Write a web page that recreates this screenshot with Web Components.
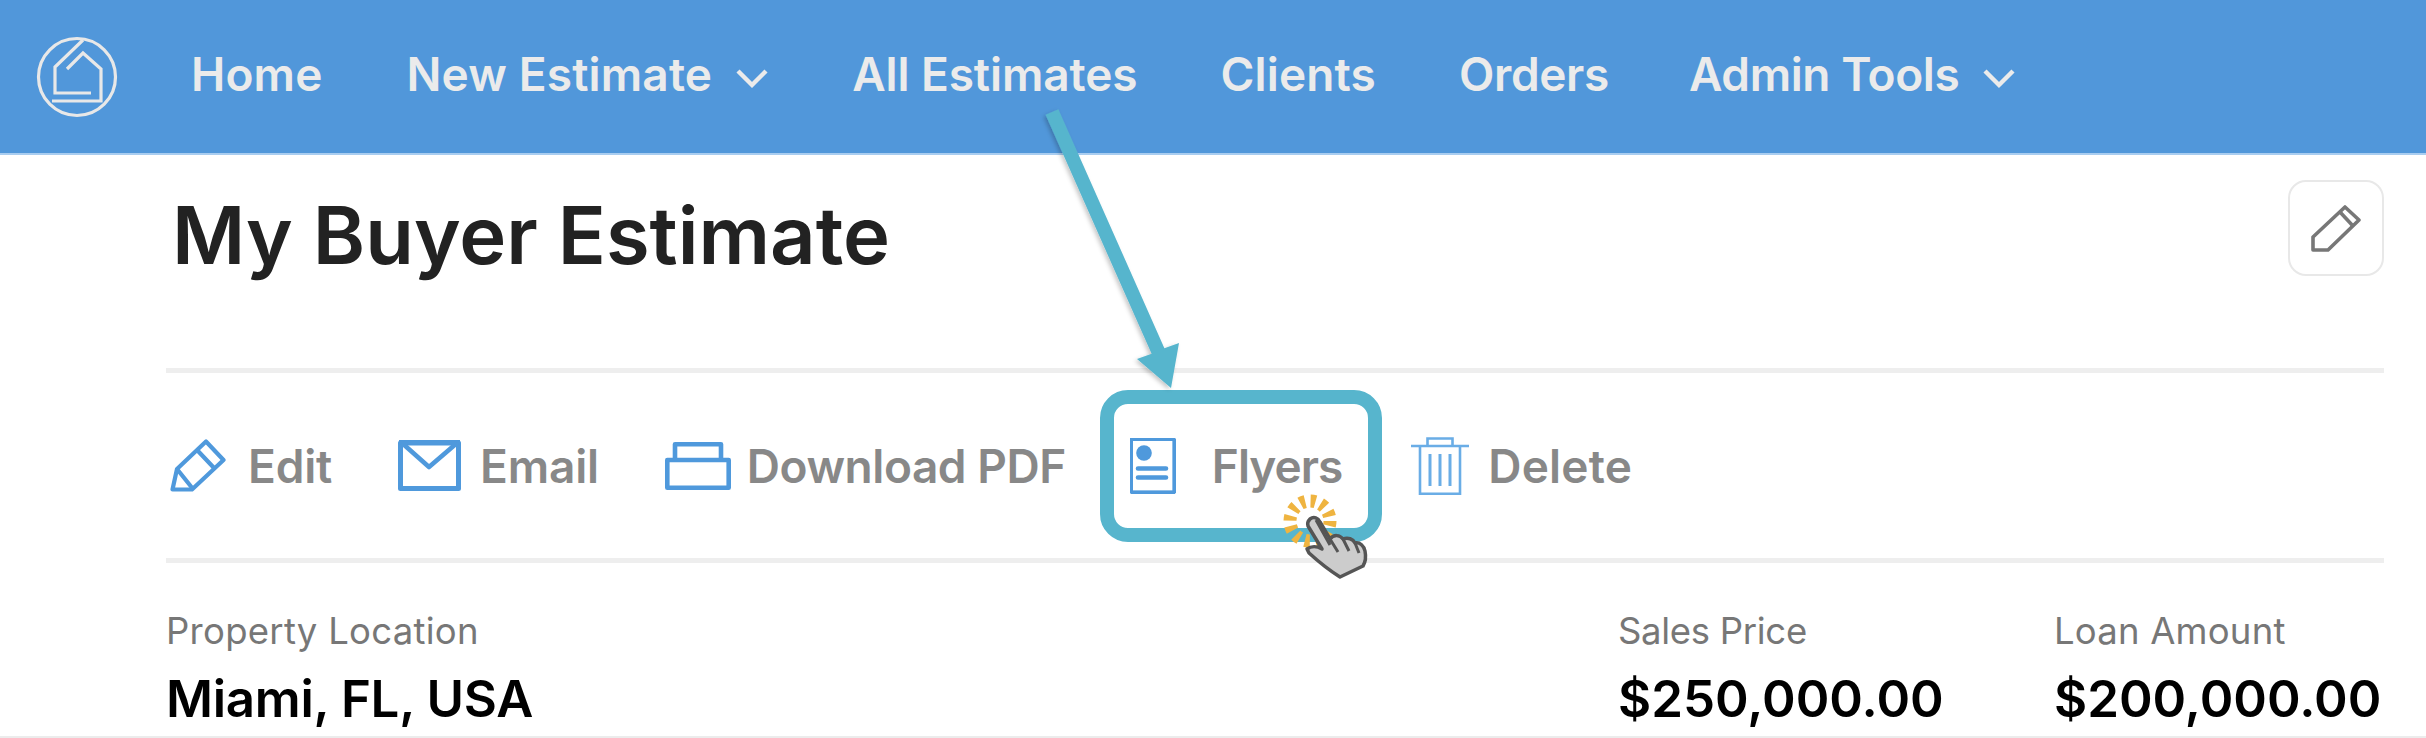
<!DOCTYPE html>
<html lang="en">
<head>
<meta charset="utf-8">
<title>My Buyer Estimate</title>
<style>
    html, body {
        margin: 0;
        height: 738px;
        overflow: hidden;
        background: #fff;
        font-family: Inter, "Noto Sans", "Liberation Sans", sans-serif;
    }
</style>
</head>
<body>

<estimate-app>
    <top-nav>
        <nav-link>Home</nav-link>
        <nav-link menu style="margin-left:1px">New Estimate</nav-link>
        <nav-link style="--track:-0.1px">All Estimates</nav-link>
        <nav-link>Clients</nav-link>
        <nav-link style="--track:-0.35px">Orders</nav-link>
        <nav-link menu style="--track:-0.4px;margin-left:-3px">Admin Tools</nav-link>
    </top-nav>
    <page-title>My Buyer Estimate</page-title>
    <action-bar>
        <action-link icon="edit" style="--gap:22px">Edit</action-link>
        <action-link icon="email" style="--gap:19px">Email</action-link>
        <action-link icon="print" style="--gap:16px;--track:-0.45px">Download PDF</action-link>
        <action-link icon="flyer" style="--gap:36px;--track:-1px;margin-left:-2px">Flyers</action-link>
        <action-link icon="trash" style="--gap:19px;--track:0.2px;margin-left:3px">Delete</action-link>
    </action-bar>
    <estimate-summary>
        <summary-stat label="Property Location" style="margin-right:auto;--label-track:0.27px;--value-track:-0.3px">Miami, FL, USA</summary-stat>
        <summary-stat label="Sales Price" style="width:436px;--label-track:-0.3px">$250,000.00</summary-stat>
        <summary-stat label="Loan Amount" style="width:330px;--label-track:0.2px">$200,000.00</summary-stat>
    </estimate-summary>
    <flyers-callout></flyers-callout>
</estimate-app>

<script>
const templateApp = document.createElement('template')
templateApp.innerHTML = `
<style>
    :host{
        display: block;
        position: relative;
        width: 2426px;
        height: 738px;
        overflow: hidden;
    }
</style>
<slot></slot>
`
class EstimateApp extends HTMLElement {
    constructor(){
        super()
        this.attachShadow({mode:'open'})
        this.shadowRoot.appendChild(templateApp.content.cloneNode(true))
    }
}
customElements.define('estimate-app', EstimateApp)

const templateNav = document.createElement('template')
templateNav.innerHTML = `
<style>
    :host{
        display: flex;
        align-items: center;
        height: 153px;
        border-bottom: 2px solid #a9cdf0;
        background: #5197da;
        color: #ebebeb;
    }
    svg{
        width: 84px;
        height: 84px;
        margin: 0 72px 0 35px;
        flex: none;
    }
    .links{
        display: flex;
        align-items: center;
        gap: 83px;
        margin-bottom: 5px;
    }
</style>
<svg viewBox="35 31 84 84" fill="none" stroke="#e8e8e8" stroke-width="3.2">
    <circle cx="77" cy="73" r="38.5"/>
    <path d="M83 36 55 63V89H91"/>
    <path d="M67 65 83 49 101 65V97H52"/>
</svg>
<div class="links"><slot></slot></div>
`
class TopNav extends HTMLElement {
    constructor(){
        super()
        this.attachShadow({mode:'open'})
        this.shadowRoot.appendChild(templateNav.content.cloneNode(true))
    }
}
customElements.define('top-nav', TopNav)

const templateNavLink = document.createElement('template')
templateNavLink.innerHTML = `
<style>
    :host{
        display: flex;
        align-items: center;
        font-size: 46px;
        font-weight: 600;
        letter-spacing: var(--track, 0.15px);
        line-height: 56px;
    }
    svg{
        display: none;
        width: 34px;
        height: 22px;
        margin-left: 23px;
        margin-top: 8px;
    }
    :host([menu]) svg{
        display: block;
    }
</style>
<slot></slot>
<svg viewBox="0 0 34 22" fill="none" stroke="#ebebeb" stroke-width="4.4"><path d="M3 4 17 18 31 4"/></svg>
`
class NavLink extends HTMLElement {
    constructor(){
        super()
        this.attachShadow({mode:'open'})
        this.shadowRoot.appendChild(templateNavLink.content.cloneNode(true))
    }
}
customElements.define('nav-link', NavLink)

const templateTitle = document.createElement('template')
templateTitle.innerHTML = `
<style>
    :host{
        display: flex;
        align-items: flex-start;
        justify-content: space-between;
        height: 213px;
        margin: 0 42px 0 166px;
        border-bottom: 5px solid #eeeeee;
    }
    h1{
        margin: 33px 0 0 6px;
        font-size: 79.500px;
        font-weight: 600;
        line-height: 94px;
        color: #222;
    }
    button{
        width: 96px;
        height: 96px;
        margin-top: 25px;
        padding: 0;
        border: 2px solid #e8e8e8;
        border-radius: 18px;
        background: #fff;
        display: flex;
        align-items: center;
        justify-content: center;
    }
</style>
<h1><slot></slot></h1>
<button>
    <svg width="50" height="47" viewBox="0 0 50 47" fill="none" stroke="#777" stroke-width="3.600" stroke-linejoin="round">
        <path d="M2 45V32L34 2 48 15 17 45Z"/>
        <path d="M29 7 42 21"/>
    </svg>
</button>
`
class PageTitle extends HTMLElement {
    constructor(){
        super()
        this.attachShadow({mode:'open'})
        this.shadowRoot.appendChild(templateTitle.content.cloneNode(true))
    }
}
customElements.define('page-title', PageTitle)

const templateBar = document.createElement('template')
templateBar.innerHTML = `
<style>
    :host{
        display: flex;
        align-items: center;
        gap: 66px;
        height: 185px;
        margin: 0 42px 0 166px;
        padding-left: 4px;
        border-bottom: 5px solid #eeeeee;
    }
</style>
<slot></slot>
`
class ActionBar extends HTMLElement {
    constructor(){
        super()
        this.attachShadow({mode:'open'})
        this.shadowRoot.appendChild(templateBar.content.cloneNode(true))
    }
}
customElements.define('action-bar', ActionBar)

const actionIcons = {
    edit: `<svg width="56" height="54" viewBox="170 437 56 54" fill="none" stroke="#4f99dc" stroke-width="4.2" stroke-linejoin="round">
        <path d="M206 439.500 223.500 458 192 487.500H172.500L177 467Z"/>
        <path d="M198 449 215 467M177 467 193 487"/>
    </svg>`,
    email: `<svg width="63" height="51" viewBox="400 436 63 51" fill="none" stroke="#4f99dc" stroke-width="5" stroke-linejoin="round">
        <path d="M402.500 439H460.500V484.500H402.500Z" />
        <path d="M401 437.500H462" stroke-width="5.500"/>
        <path d="M404 439 431 463 459 439" stroke-width="4.600"/>
    </svg>`,
    print: `<svg width="66" height="48" viewBox="663 438 66 48" fill="none" stroke="#4f99dc" stroke-width="4.600" stroke-linejoin="round">
        <path d="M673 456V440.300H719V456"/>
        <path d="M665.300 456H726.700V483.700H665.300Z"/>
    </svg>`,
    flyer: `<svg width="46" height="56" viewBox="1130 436 46 56" fill="none" stroke="#4f99dc" stroke-width="3">
        <path d="M1131.500 437.500H1174V490H1131.500Z" />
        <path d="M1174.500 437V491M1131 490.500H1175" stroke-width="3.500"/>
        <circle cx="1144" cy="451" r="7.800" fill="#4f99dc" stroke="none"/>
        <path d="M1138 466.500H1166M1138 475.500H1166" stroke-width="4.600" stroke-linecap="round"/>
    </svg>`,
    trash: `<svg width="58" height="58" viewBox="1412 436 58 58" fill="none" stroke="#6aade6" stroke-width="2.6">
        <path d="M1412 445H1470"/>
        <path d="M1428.500 445V437.500H1453.500V445"/>
        <path d="M1421 445V492.800H1461V445"/>
        <path d="M1431 453V485M1441 453V485M1451 453V485" stroke-width="3"/>
    </svg>`
}

const templateAction = document.createElement('template')
templateAction.innerHTML = `
<style>
    :host{
        display: flex;
        align-items: center;
        gap: var(--gap, 20px);
        font-size: 46px;
        font-weight: 600;
        letter-spacing: var(--track, -0.2px);
        color: #888;
    }
    .icon{
        display: flex;
    }
</style>
<span class="icon"></span>
<slot></slot>
`
class ActionLink extends HTMLElement {
    constructor(){
        super()
        this.attachShadow({mode:'open'})
        this.shadowRoot.appendChild(templateAction.content.cloneNode(true))
        this.shadowRoot.querySelector('.icon').innerHTML = actionIcons[this.getAttribute('icon')] || ''
    }
}
customElements.define('action-link', ActionLink)

const templateSummary = document.createElement('template')
templateSummary.innerHTML = `
<style>
    :host{
        display: flex;
        height: 175px;
        margin: 0 42px 0 166px;
        padding-top: 47px;
        box-sizing: border-box;
    }
    :host::after{
        content: "";
        position: absolute;
        left: 0;
        right: 0;
        bottom: 0;
        height: 2px;
        background: #ececec;
    }
</style>
<slot></slot>
`
class EstimateSummary extends HTMLElement {
    constructor(){
        super()
        this.attachShadow({mode:'open'})
        this.shadowRoot.appendChild(templateSummary.content.cloneNode(true))
    }
}
customElements.define('estimate-summary', EstimateSummary)

const templateStat = document.createElement('template')
templateStat.innerHTML = `
<style>
    :host{
        display: flex;
        flex-direction: column;
        gap: 17px;
        box-sizing: border-box;
    }
    .label{
        font-size: 36.500px;
        line-height: 42px;
        letter-spacing: var(--label-track, 0);
        color: #777;
    }
    .value{
        font-size: 51px;
        font-weight: 600;
        line-height: 60px;
        letter-spacing: var(--value-track, 0);
        color: #000;
        white-space: nowrap;
    }
</style>
<div class="label"></div>
<div class="value"><slot></slot></div>
`
class SummaryStat extends HTMLElement {
    constructor(){
        super()
        this.attachShadow({mode:'open'})
        this.shadowRoot.appendChild(templateStat.content.cloneNode(true))
        this.shadowRoot.querySelector('.label').textContent = this.getAttribute('label')
    }
}
customElements.define('summary-stat', SummaryStat)

const templateCallout = document.createElement('template')
templateCallout.innerHTML = `
<style>
    :host{
        position: absolute;
        inset: 0;
        pointer-events: none;
    }
    svg{
        position: absolute;
        left: 0;
        top: 0;
    }
</style>
<svg width="2426" height="738" viewBox="0 0 2426 738" fill="none">
    <defs>
        <filter id="soft" x="-30%" y="-30%" width="160%" height="160%">
            <feDropShadow dx="-2" dy="2" stdDeviation="2" flood-color="#000" flood-opacity=".22"/>
        </filter>
    </defs>
    <rect x="1107" y="397" width="268" height="138" rx="21" stroke="#57b5cd" stroke-width="14"/>
    <g filter="url(#soft)">
        <path d="M1045.600 114.800 1058.400 109.200 1164.400 348.200 1179 343 1171 388 1137 359 1151.600 353.800Z" fill="#57b5cd"/>
    </g>
    <circle cx="1310" cy="521" r="20" stroke="#efb440" stroke-width="13" stroke-dasharray="5 5.470"/>
    <path d="M1310 519C1314 516 1318 518 1320 522L1330 539C1334 534 1340 535 1343 539C1348 537 1353 539 1355 543C1360 542 1364 546 1365 551C1366 556 1366 561 1363 566L1340 577C1332 572 1320 563 1309 553L1307 549C1311 546 1317 546 1322 549L1308 526C1307 523 1308 521 1310 519Z" fill="#ccc" stroke="#555" stroke-width="3.500" stroke-linejoin="round"/>
    <path d="M1316 520 1330 545M1330 539 1338 552M1343 539 1349 551M1355 543 1359 553" stroke="#555" stroke-width="3"/>
</svg>
`
class FlyersCallout extends HTMLElement {
    constructor(){
        super()
        this.attachShadow({mode:'open'})
        this.shadowRoot.appendChild(templateCallout.content.cloneNode(true))
    }
}
customElements.define('flyers-callout', FlyersCallout)
</script>
</body>
</html>
